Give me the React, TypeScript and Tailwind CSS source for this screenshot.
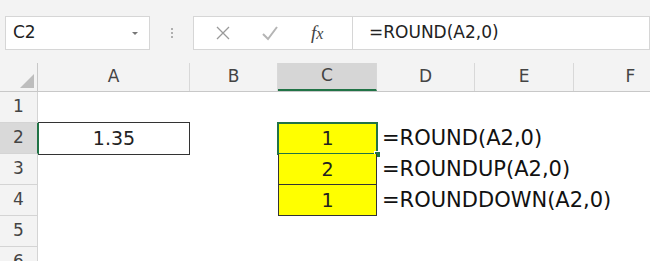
import { useState } from 'react';

const cols = [
  { key: 'A', w: 'w-[152px]' },
  { key: 'B', w: 'w-[88px]' },
  { key: 'C', w: 'w-[99px]' },
  { key: 'D', w: 'w-[98px]' },
  { key: 'E', w: 'w-[99px]' },
  { key: 'F', w: 'w-[114px]' },
];

const rows = [1, 2, 3, 4, 5, 6];

const formulas: Record<number, { value: string; text: string }> = {
  2: { value: '1', text: '=ROUND(A2,0)' },
  3: { value: '2', text: '=ROUNDUP(A2,0)' },
  4: { value: '1', text: '=ROUNDDOWN(A2,0)' },
};

export default function App() {
  const [active] = useState('C2');

  return (
    <div className="w-[650px] h-[261px] overflow-hidden bg-white font-['DejaVu_Sans',sans-serif] text-[#222]">
      {/* Formula bar */}
      <div className="h-[63px] bg-[#f3f3f3] flex items-start pt-[16px] pl-[5px]">
        <div className="w-[145px] shrink-0 h-[34px] bg-white border border-[#d6d6d6] flex items-center justify-between pl-[7px] pr-[11px]">
          <span className="text-[17px] text-[#222]">{active}</span>
          <span className="w-0 h-0 border-l-[3px] border-r-[3px] border-t-[3px] border-l-transparent border-r-transparent border-t-[#777]" />
        </div>
        <div className="w-[43px] shrink-0 h-[34px] flex flex-col items-center justify-center gap-[2px]">
          <span className="w-[2px] h-[2px] rounded-full bg-[#999]" />
          <span className="w-[2px] h-[2px] rounded-full bg-[#999]" />
          <span className="w-[2px] h-[2px] rounded-full bg-[#999]" />
        </div>
        <div className="w-[160px] shrink-0 h-[34px] bg-white border border-[#d6d6d6] flex items-center">
          <svg width="16" height="16" viewBox="0 0 16 16" className="ml-[21px]">
            <path d="M2 2 L14 14 M14 2 L2 14" stroke="#9a9a9a" strokeWidth="1.3" fill="none" />
          </svg>
          <svg width="18" height="16" viewBox="0 0 18 16" className="ml-[30px]">
            <path d="M2 9 L7 14 L16 2" stroke="#b5b5b5" strokeWidth="2" fill="none" />
          </svg>
          <span className="ml-[32px] font-['Liberation_Serif',serif] italic text-[19px] text-[#444]">
            f<span className="text-[16px]">x</span>
          </span>
        </div>
        <div className="flex-1 h-[34px] bg-white border border-l-0 border-[#d6d6d6] flex items-center pl-[16px]">
          <span className="text-[17px] text-[#222]">=ROUND(A2,0)</span>
        </div>
      </div>

      {/* Column headers */}
      <div className="flex h-[29px] bg-[#f3f3f3] border-b border-[#c8c8c8]">
        <div className="w-[38px] shrink-0 border-r border-[#c8c8c8] relative">
          <svg width="14" height="14" viewBox="0 0 14 14" className="absolute right-[3px] bottom-[3px]">
            <path d="M14 0 L14 14 L0 14 Z" fill="#bdbdbd" />
          </svg>
        </div>
        {cols.map((c) => (
          <div
            key={c.key}
            className={`${c.w} shrink-0 flex items-center justify-center border-r border-[#d8d8d8] text-[17px] text-[#444] ${
              c.key === 'C' ? 'bg-[#d6d6d6] border-b-2 border-b-[#217346]' : ''
            }`}
          >
            {c.key}
          </div>
        ))}
      </div>

      {/* Rows */}
      {rows.map((r) => (
        <div key={r} className="flex h-[31px]">
          <div
            className={`w-[38px] shrink-0 flex items-center justify-center border-r border-b border-[#d4d4d4] text-[17px] text-[#444] ${
              r === 2 ? 'bg-[#d9d9d9] border-r-[#217346]' : 'bg-[#f3f3f3]'
            }`}
          >
            {r}
          </div>
          {/* A */}
          <div className="w-[152px] shrink-0 flex items-center justify-center">
            {r === 2 && (
              <div className="w-full h-[33px] -mt-[1px] border border-[#333] border-l-[#217346] flex items-center justify-center text-[19px]">
                1.35
              </div>
            )}
          </div>
          {/* B */}
          <div className="w-[88px] shrink-0" />
          {/* C */}
          <div className="w-[99px] shrink-0 relative">
            {formulas[r] && (
              <div
                className={`h-full bg-[#ffff00] border-x border-b border-[#333] flex items-center justify-center text-[19px] ${
                  r === 2 ? 'border-t' : ''
                }`}
              >
                {formulas[r].value}
              </div>
            )}
            {r === 2 && (
              <>
                <div className="absolute inset-[-1px] border-2 border-[#217346] pointer-events-none" />
                <div className="absolute right-[-4px] bottom-[-4px] w-[7px] h-[7px] bg-[#217346] border border-white" />
              </>
            )}
          </div>
          {/* D onward */}
          <div className="flex-1 flex items-center pl-[5px] text-[21px] text-[#111] whitespace-nowrap">
            {formulas[r]?.text}
          </div>
        </div>
      ))}
    </div>
  );
}
